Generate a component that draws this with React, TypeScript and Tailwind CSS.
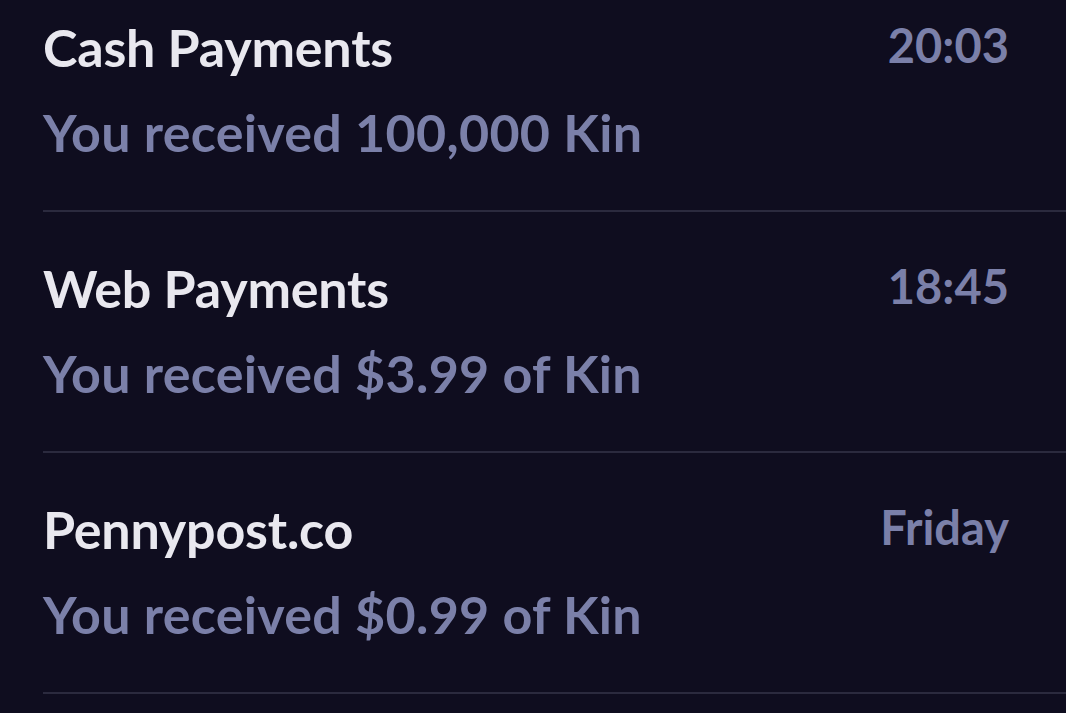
import React from "react";

const rows = [
  { title: "Cash Payments", sub: "You received 100,000 Kin", time: "20:03" },
  { title: "Web Payments", sub: "You received $3.99 of Kin", time: "18:45" },
  { title: "Pennypost.co", sub: "You received $0.99 of Kin", time: "Friday" },
];

export default function App() {
  return (
    <div
      className="w-[1066px] h-[713px] overflow-hidden bg-[#0f0d1f] pl-[43px]"
      style={{ fontFamily: "Lato, 'Noto Sans', sans-serif" }}
    >
      <div className="-mt-[29px] flex flex-col">
        {rows.map((r) => (
          <div
            key={r.title}
            className="flex flex-col border-b-2 border-[#2b2a3e] pt-[46px] pb-[48px] pr-[57px]"
          >
            <div className="flex items-start justify-between h-[60px]">
              <span className="text-[52px] leading-[60px] font-bold text-[#e9e8ef] tracking-[-0.2px]">
                {r.title}
              </span>
              <span className="text-[47px] leading-[56px] font-bold text-[#7b80a9]">
                {r.time}
              </span>
            </div>
            <div className="mt-[25px] h-[60px] text-[52px] leading-[60px] font-bold text-[#7b80a9] tracking-[0.3px]">
              {r.sub}
            </div>
          </div>
        ))}
      </div>
    </div>
  );
}
